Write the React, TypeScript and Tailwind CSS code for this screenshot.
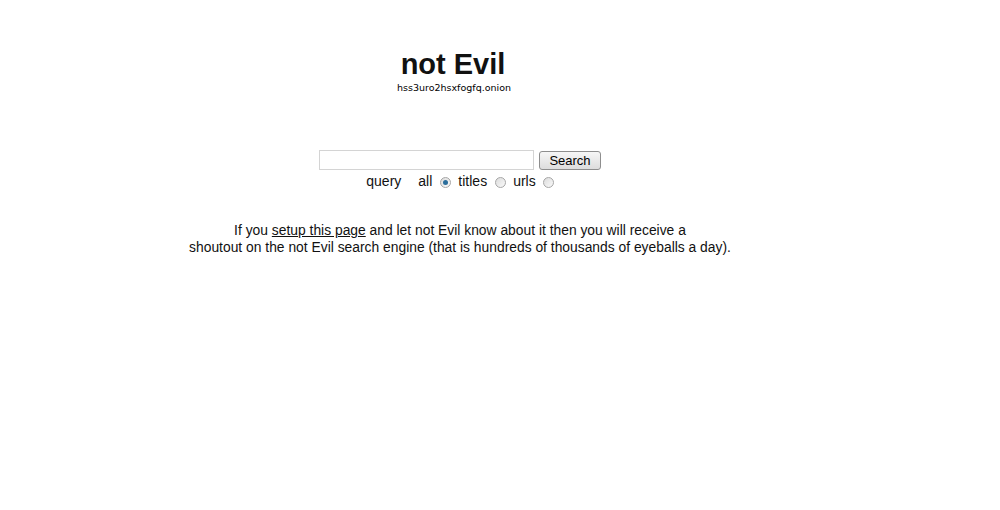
import React from "react";

function Radio({ checked = false }: { checked?: boolean }) {
  return (
    <span className="inline-flex h-[11px] w-[11px] items-center justify-center rounded-full border border-[#a6a6a6] bg-gradient-to-br from-[#dcdcdc] to-[#fafafa] align-middle">
      {checked && <span className="h-[5px] w-[5px] rounded-full bg-[#2b6e9c]" />}
    </span>
  );
}

export default function App() {
  return (
    <div className="min-h-[510px] w-[1000px] bg-white text-[#111]" style={{ fontFamily: '"Liberation Sans", Arial, sans-serif' }}>
      <div className="flex w-[920px] flex-col items-center pt-[46px]">
        <h1 className="ml-[-14px] text-[29px] font-bold leading-[36px]">not Evil</h1>
        <div className="ml-[-12px] text-[9.5px] leading-[12px] text-black" style={{ fontFamily: '"DejaVu Sans", sans-serif' }}>
          hss3uro2hsxfogfq.onion
        </div>

        <form className="mt-[56px] flex flex-col items-center" onSubmit={(e) => e.preventDefault()}>
          <div className="flex items-center gap-[5px]">
            <input
              type="text"
              className="h-[20px] w-[215px] border border-[#d4d4d4] bg-white px-1 text-[13px] outline-none"
            />
            <button
              type="button"
              className="h-[19px] w-[62px] rounded-[3px] border border-[#8e8e8e] bg-gradient-to-b from-[#f6f6f6] to-[#dddddd] text-[13px] leading-[17px] text-black"
            >
              Search
            </button>
          </div>
          <div className="mt-[2px] flex items-center text-[14px] leading-[18px]">
            <span>query</span>
            <span className="ml-[17px]">all</span>
            <span className="ml-[8px]"><Radio checked /></span>
            <span className="ml-[7px]">titles</span>
            <span className="ml-[8px]"><Radio /></span>
            <span className="ml-[7px]">urls</span>
            <span className="ml-[7px]"><Radio /></span>
          </div>
        </form>

        <p className="mt-[32px] text-center text-[13.85px] leading-[17px]">
          If you <a className="underline" href="#">setup this page</a> and let not Evil know about it then you will receive a
          <br />
          shoutout on the not Evil search engine (that is hundreds of thousands of eyeballs a day).
        </p>
      </div>
    </div>
  );
}
